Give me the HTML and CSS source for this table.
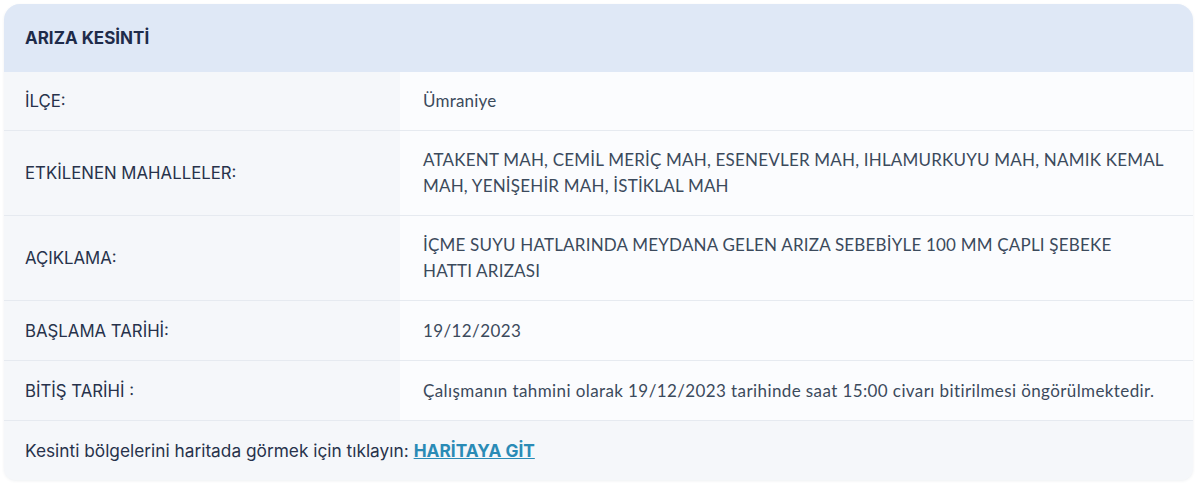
FILE: index.html
```html
<!DOCTYPE html>
<html lang="tr">
<head>
    <meta charset="utf-8">
    <title>Arıza Kesinti</title>
    <link rel="stylesheet" href="styles.css">
</head>
<body>

<div class="card">
    <div class="card-head">ARIZA KESİNTİ</div>

    <div class="row">
        <div class="label">İLÇE:</div>
        <div class="value">Ümraniye</div>
    </div>
    <div class="row">
        <div class="label">ETKİLENEN MAHALLELER:</div>
        <div class="value">ATAKENT MAH, CEMİL MERİÇ MAH, ESENEVLER MAH, IHLAMURKUYU MAH, NAMIK KEMAL MAH, YENİŞEHİR MAH, İSTİKLAL MAH</div>
    </div>
    <div class="row">
        <div class="label">AÇIKLAMA:</div>
        <div class="value">İÇME SUYU HATLARINDA MEYDANA GELEN ARIZA SEBEBİYLE 100 MM ÇAPLI ŞEBEKE HATTI ARIZASI</div>
    </div>
    <div class="row short">
        <div class="label">BAŞLAMA TARİHİ:</div>
        <div class="value">19/12/2023</div>
    </div>
    <div class="row short">
        <div class="label">BİTİŞ TARİHİ :</div>
        <div class="value">Çalışmanın tahmini olarak 19/12/2023 tarihinde saat 15:00 civarı bitirilmesi öngörülmektedir.</div>
    </div>

    <div class="card-foot">
        Kesinti bölgelerini haritada görmek için tıklayın: <a href="#">HARİTAYA GİT</a>
    </div>
</div>

</body>
</html>
```

FILE: styles.css
```css
:root {
    --head-bg: #dfe8f6;
    --label-bg: #f5f7fa;
    --value-bg: #fbfcfe;
    --line: #e6eaf0;
    --label-color: #27324b;
    --value-color: #3b4a5c;
    --link-color: #2a8bb6;
}

body {
    margin: 0;
    padding: 4px 7px 8px 4px;
    background: #fff;
    font-family: Inter, "Noto Sans", sans-serif;
}

.card {
    border-radius: 16px 16px 12px 12px;
    overflow: hidden;
    background: var(--label-bg);
    box-shadow: 0 1px 3px rgba(40, 60, 90, 0.08);
}

.card-head {
    background: var(--head-bg);
    color: #1e2b4a;
    font-weight: 700;
    font-size: 17px;
    height: 68px;
    display: flex;
    align-items: center;
    padding-left: 21px;
}

.row {
    display: grid;
    grid-template-columns: 396px 1fr;
    min-height: 58px;
    border-bottom: 1px solid var(--line);
}

.label {
    background: var(--label-bg);
    color: var(--label-color);
    font-size: 16.8px;
    display: flex;
    align-items: center;
    padding-left: 21px;
}

.value {
    background: var(--value-bg);
    color: var(--value-color);
    font-family: Lato, "Noto Sans", sans-serif;
    font-size: 17px;
    letter-spacing: 0.2px;
    line-height: 26px;
    padding: 16px 28.5px 16px 23px;
    display: flex;
    align-items: center;
}

.row.short .value {
    padding-top: 17px;
    padding-bottom: 16px;
    letter-spacing: 0.4px;
}

.card-foot {
    background: var(--label-bg);
    color: var(--label-color);
    font-size: 17.3px;
    height: 59px;
    display: flex;
    align-items: center;
    padding-left: 21px;
}

.card-foot a {
    color: var(--link-color);
    font-weight: 700;
    margin-left: 5px;
}
```
